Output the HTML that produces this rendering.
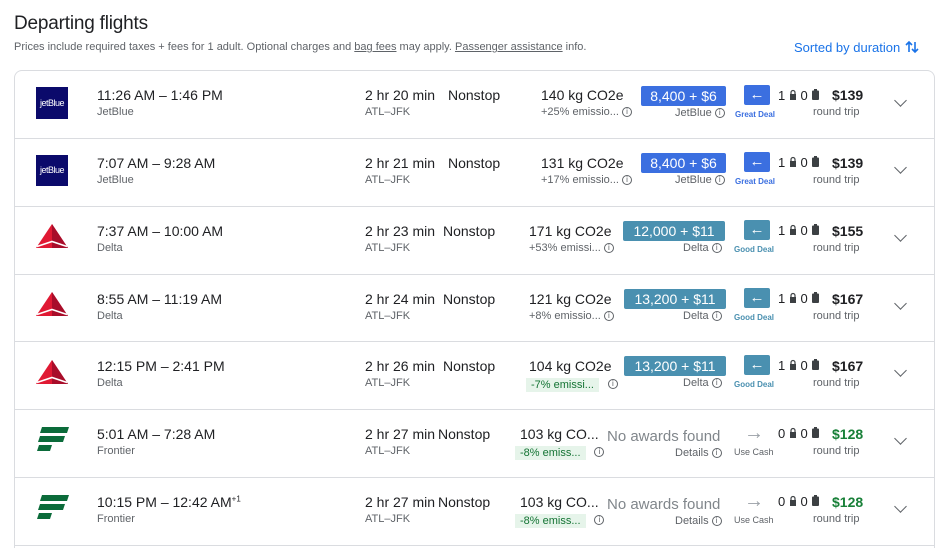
<!DOCTYPE html>
<html style="height:548px;overflow:hidden"><head><meta charset="utf-8"><style>
*{margin:0;padding:0;box-sizing:border-box}
body{width:947px;height:548px;background:#fff;font-family:"Liberation Sans",Arial,sans-serif;color:#202124;position:relative;overflow:hidden}
.a{position:absolute;white-space:nowrap}
h1{position:absolute;left:14px;top:13px;font-size:19px;font-weight:normal;color:#202124;letter-spacing:-0.2px}
.sub{left:14px;top:41px;font-size:11px;color:#5f6368}
.sub u{text-decoration:underline}
.sort{left:794px;top:39px;font-size:13px;color:#1a73e8}
.card{position:absolute;left:14px;top:70px;width:921px;height:478px;border:1px solid #dadce0;border-bottom:none;border-radius:8px 8px 0 0}
.sep{position:absolute;left:15px;width:919px;height:1px;background:#dadce0}
.t{font-size:14px;color:#202124}
.s{font-size:11px;color:#5f6368}
.badge{position:absolute;height:20px;color:#fff;font-size:14px;line-height:20px;text-align:center;border-radius:2px}
.arr{position:absolute;width:26px;height:20px;border-radius:2px;color:#fff;font-size:15px;line-height:19px;text-align:center}
.deal{font-size:8px;font-weight:bold}
.ic{display:inline-block;width:10px;height:10px;border:1px solid #5f6368;border-radius:50%;font-size:8px;line-height:8px;text-align:center;color:#5f6368;vertical-align:middle}
.chev{position:absolute;left:896px;width:9px;height:9px;border-right:1.6px solid #5f6368;border-bottom:1.6px solid #5f6368;transform:rotate(45deg)}
.green{background:#e6f4ea;color:#137333;padding:1px 5px;font-size:11px}
.uc{font-size:9px;color:#5f6368}
.ra{font-size:20px;color:#9aa0a6}
</style></head><body>
<h1>Departing flights</h1>
<div class="a sub">Prices include required taxes + fees for 1 adult. Optional charges and <u>bag fees</u> may apply. <u>Passenger assistance</u> info.</div>
<div class="a sort">Sorted by duration <svg width="16" height="16" viewBox="0 0 16 16" style="vertical-align:-3px"><path d="M5 13V3M2 6l3-3 3 3M11 3v10M8 10l3 3 3-3" stroke="#1a73e8" stroke-width="1.6" fill="none"/></svg></div>
<div class="card"></div>
<div class="sep" style="top:138px"></div><div class="sep" style="top:206px"></div><div class="sep" style="top:274px"></div><div class="sep" style="top:341px"></div><div class="sep" style="top:409px"></div><div class="sep" style="top:477px"></div><div class="sep" style="top:545px"></div>

<svg width="0" height="0" style="position:absolute"><defs>
<g id="lk"><path d="M2 5V3.5a2 2 0 014 0V5" stroke="#3c4043" stroke-width="1.2" fill="none"/><rect x="1" y="5" width="6" height="6" fill="#3c4043"/></g>
<g id="bg"><rect x="3" y="0" width="3" height="2" fill="#3c4043"/><rect x="1" y="1.5" width="7" height="9.5" rx="1" fill="#3c4043"/></g>
<g id="dl"><path d="M16 0L0 24H32Z" fill="#e01933"/><path d="M16 0L32 24H16Z" fill="#a80d2a"/><path d="M1 22.5L16 17.5L31 22.5" stroke="#fff" stroke-width="1.6" fill="none"/></g>
<g id="fr"><path d="M5 0H32L30 6H3Z" fill="#0b6b3a"/><path d="M3 9H28L26 15H1Z" fill="#0b6b3a"/><path d="M2 18H15L13 24H0Z" fill="#0b6b3a"/></g>
</defs></svg>

<!-- ROW 1 -->
<div class="a" style="left:36px;top:87px;width:32px;height:32px;background:#0b0a6b;color:#fff;font-size:9px;line-height:32px;text-align:center;letter-spacing:-0.5px">jetBlue</div>
<div class="a t" style="left:97px;top:87px">11:26 AM – 1:46 PM</div>
<div class="a s" style="left:97px;top:106px">JetBlue</div>
<div class="a t" style="left:365px;top:87px">2 hr 20 min</div>
<div class="a s" style="left:365px;top:106px">ATL–JFK</div>
<div class="a t" style="left:448px;top:87px">Nonstop</div>
<div class="a t" style="left:541px;top:87px">140 kg CO2e</div>
<div class="a s" style="left:541px;top:106px">+25% emissio... <span class="ic">i</span></div>
<div class="badge" style="left:641px;top:86px;width:85px;background:#3b6fe0">8,400 + $6</div>
<div class="a s" style="left:675px;top:107px">JetBlue <span class="ic">i</span></div>
<div class="arr" style="left:744px;top:85px;background:#3b6fe0">←</div>
<div class="a deal" style="left:735px;top:110px;color:#3b6fe0">Great Deal</div>
<div class="a t" style="left:778px;top:88px;font-size:13px">1 <svg width="8" height="11"><use href="#lk"/></svg> 0 <svg width="9" height="11"><use href="#bg"/></svg></div>
<div class="a t" style="left:832px;top:87px;font-weight:bold">$139</div>
<div class="a s" style="left:813px;top:106px">round trip</div>
<div class="chev" style="top:96px"></div>

<!-- ROW 2 -->
<div class="a" style="left:36px;top:155px;width:32px;height:31px;background:#0b0a6b;color:#fff;font-size:9px;line-height:31px;text-align:center;letter-spacing:-0.5px">jetBlue</div>
<div class="a t" style="left:97px;top:155px">7:07 AM – 9:28 AM</div>
<div class="a s" style="left:97px;top:174px">JetBlue</div>
<div class="a t" style="left:365px;top:155px">2 hr 21 min</div>
<div class="a s" style="left:365px;top:174px">ATL–JFK</div>
<div class="a t" style="left:448px;top:155px">Nonstop</div>
<div class="a t" style="left:541px;top:155px">131 kg CO2e</div>
<div class="a s" style="left:541px;top:174px">+17% emissio... <span class="ic">i</span></div>
<div class="badge" style="left:641px;top:153px;width:85px;background:#3b6fe0">8,400 + $6</div>
<div class="a s" style="left:675px;top:174px">JetBlue <span class="ic">i</span></div>
<div class="arr" style="left:744px;top:152px;background:#3b6fe0">←</div>
<div class="a deal" style="left:735px;top:177px;color:#3b6fe0">Great Deal</div>
<div class="a t" style="left:778px;top:155px;font-size:13px">1 <svg width="8" height="11"><use href="#lk"/></svg> 0 <svg width="9" height="11"><use href="#bg"/></svg></div>
<div class="a t" style="left:832px;top:155px;font-weight:bold">$139</div>
<div class="a s" style="left:813px;top:174px">round trip</div>
<div class="chev" style="top:163px"></div>

<!-- ROW 3 -->
<svg class="a" style="left:36px;top:224px" width="32" height="24" viewBox="0 0 32 24"><use href="#dl"/></svg>
<div class="a t" style="left:97px;top:223px">7:37 AM – 10:00 AM</div>
<div class="a s" style="left:97px;top:242px">Delta</div>
<div class="a t" style="left:365px;top:223px">2 hr 23 min</div>
<div class="a s" style="left:365px;top:242px">ATL–JFK</div>
<div class="a t" style="left:443px;top:223px">Nonstop</div>
<div class="a t" style="left:529px;top:223px">171 kg CO2e</div>
<div class="a s" style="left:529px;top:242px">+53% emissi... <span class="ic">i</span></div>
<div class="badge" style="left:623px;top:221px;width:102px;background:#4a90b0">12,000 + $11</div>
<div class="a s" style="left:683px;top:242px">Delta <span class="ic">i</span></div>
<div class="arr" style="left:744px;top:220px;background:#4a90b0">←</div>
<div class="a deal" style="left:734px;top:245px;color:#4a90b0">Good Deal</div>
<div class="a t" style="left:778px;top:223px;font-size:13px">1 <svg width="8" height="11"><use href="#lk"/></svg> 0 <svg width="9" height="11"><use href="#bg"/></svg></div>
<div class="a t" style="left:832px;top:223px;font-weight:bold">$155</div>
<div class="a s" style="left:813px;top:242px">round trip</div>
<div class="chev" style="top:231px"></div>

<!-- ROW 4 -->
<svg class="a" style="left:36px;top:292px" width="32" height="24" viewBox="0 0 32 24"><use href="#dl"/></svg>
<div class="a t" style="left:97px;top:291px">8:55 AM – 11:19 AM</div>
<div class="a s" style="left:97px;top:310px">Delta</div>
<div class="a t" style="left:365px;top:291px">2 hr 24 min</div>
<div class="a s" style="left:365px;top:310px">ATL–JFK</div>
<div class="a t" style="left:443px;top:291px">Nonstop</div>
<div class="a t" style="left:529px;top:291px">121 kg CO2e</div>
<div class="a s" style="left:529px;top:310px">+8% emissio... <span class="ic">i</span></div>
<div class="badge" style="left:624px;top:289px;width:102px;background:#4a90b0">13,200 + $11</div>
<div class="a s" style="left:683px;top:310px">Delta <span class="ic">i</span></div>
<div class="arr" style="left:744px;top:288px;background:#4a90b0">←</div>
<div class="a deal" style="left:734px;top:313px;color:#4a90b0">Good Deal</div>
<div class="a t" style="left:778px;top:291px;font-size:13px">1 <svg width="8" height="11"><use href="#lk"/></svg> 0 <svg width="9" height="11"><use href="#bg"/></svg></div>
<div class="a t" style="left:832px;top:291px;font-weight:bold">$167</div>
<div class="a s" style="left:813px;top:310px">round trip</div>
<div class="chev" style="top:299px"></div>

<!-- ROW 5 -->
<svg class="a" style="left:36px;top:360px" width="32" height="24" viewBox="0 0 32 24"><use href="#dl"/></svg>
<div class="a t" style="left:97px;top:358px">12:15 PM – 2:41 PM</div>
<div class="a s" style="left:97px;top:377px">Delta</div>
<div class="a t" style="left:365px;top:358px">2 hr 26 min</div>
<div class="a s" style="left:365px;top:377px">ATL–JFK</div>
<div class="a t" style="left:443px;top:358px">Nonstop</div>
<div class="a t" style="left:529px;top:358px">104 kg CO2e</div>
<div class="a" style="left:526px;top:375px"><span class="green">-7% emissi...</span> &nbsp;<span class="ic">i</span></div>
<div class="badge" style="left:624px;top:356px;width:102px;background:#4a90b0">13,200 + $11</div>
<div class="a s" style="left:683px;top:377px">Delta <span class="ic">i</span></div>
<div class="arr" style="left:744px;top:355px;background:#4a90b0">←</div>
<div class="a deal" style="left:734px;top:380px;color:#4a90b0">Good Deal</div>
<div class="a t" style="left:778px;top:358px;font-size:13px">1 <svg width="8" height="11"><use href="#lk"/></svg> 0 <svg width="9" height="11"><use href="#bg"/></svg></div>
<div class="a t" style="left:832px;top:358px;font-weight:bold">$167</div>
<div class="a s" style="left:813px;top:377px">round trip</div>
<div class="chev" style="top:366px"></div>

<!-- ROW 6 -->
<svg class="a" style="left:37px;top:427px" width="32" height="24" viewBox="0 0 32 24"><use href="#fr"/></svg>
<div class="a t" style="left:97px;top:426px">5:01 AM – 7:28 AM</div>
<div class="a s" style="left:97px;top:445px">Frontier</div>
<div class="a t" style="left:365px;top:426px">2 hr 27 min</div>
<div class="a s" style="left:365px;top:445px">ATL–JFK</div>
<div class="a t" style="left:438px;top:426px">Nonstop</div>
<div class="a t" style="left:520px;top:426px">103 kg CO...</div>
<div class="a" style="left:515px;top:443px"><span class="green">-8% emiss...</span> &nbsp;<span class="ic">i</span></div>
<div class="a" style="left:607px;top:428px;font-size:15px;color:#80868b">No awards found</div>
<div class="a s" style="left:675px;top:447px">Details <span class="ic">i</span></div>
<div class="a ra" style="left:744px;top:422px">→</div>
<div class="a uc" style="left:734px;top:447px">Use Cash</div>
<div class="a t" style="left:778px;top:426px;font-size:13px">0 <svg width="8" height="11"><use href="#lk"/></svg> 0 <svg width="9" height="11"><use href="#bg"/></svg></div>
<div class="a t" style="left:832px;top:426px;font-weight:bold;color:#188038">$128</div>
<div class="a s" style="left:813px;top:445px">round trip</div>
<div class="chev" style="top:434px"></div>

<!-- ROW 7 -->
<svg class="a" style="left:37px;top:495px" width="32" height="24" viewBox="0 0 32 24"><use href="#fr"/></svg>
<div class="a t" style="left:97px;top:494px">10:15 PM – 12:42 AM<sup style="font-size:8px">+1</sup></div>
<div class="a s" style="left:97px;top:513px">Frontier</div>
<div class="a t" style="left:365px;top:494px">2 hr 27 min</div>
<div class="a s" style="left:365px;top:513px">ATL–JFK</div>
<div class="a t" style="left:438px;top:494px">Nonstop</div>
<div class="a t" style="left:520px;top:494px">103 kg CO...</div>
<div class="a" style="left:515px;top:511px"><span class="green">-8% emiss...</span> &nbsp;<span class="ic">i</span></div>
<div class="a" style="left:607px;top:496px;font-size:15px;color:#80868b">No awards found</div>
<div class="a s" style="left:675px;top:515px">Details <span class="ic">i</span></div>
<div class="a ra" style="left:744px;top:490px">→</div>
<div class="a uc" style="left:734px;top:515px">Use Cash</div>
<div class="a t" style="left:778px;top:494px;font-size:13px">0 <svg width="8" height="11"><use href="#lk"/></svg> 0 <svg width="9" height="11"><use href="#bg"/></svg></div>
<div class="a t" style="left:832px;top:494px;font-weight:bold;color:#188038">$128</div>
<div class="a s" style="left:813px;top:513px">round trip</div>
<div class="chev" style="top:502px"></div>
</body></html>
